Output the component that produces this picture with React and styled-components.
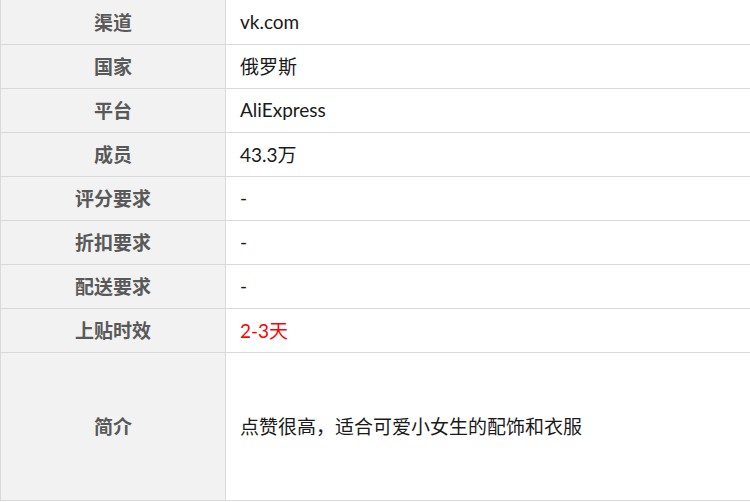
import styled, { createGlobalStyle } from 'styled-components'

const Global = createGlobalStyle`
   html, body { margin: 0; padding: 0; background: #fff; }
   body { font-family: "Noto Sans CJK SC", sans-serif; }
`

const rows = [
   ["渠道", "vk.com"],
   ["国家", "俄罗斯"],
   ["平台", "AliExpress"],
   ["成员", "43.3万"],
   ["评分要求", "-"],
   ["折扣要求", "-"],
   ["配送要求", "-"],
   ["上贴时效", "2-3天", true],
]

export default function App() {
   return <Page>
      <Global />
      <Table>
         {rows.map(([label, value, hot], i) => (
            <Row key={label} $first={i === 0}>
               <Label>{label}</Label>
               <Value $hot={hot}>{value}</Value>
            </Row>
         ))}
         <Row $tall>
            <Label>简介</Label>
            <Value>点赞很高，适合可爱小女生的配饰和衣服</Value>
         </Row>
      </Table>
   </Page>
}

const Page = styled.div`
   width: 750px;
   height: 502px;
   overflow: hidden;
   background: #fff;`

const Table = styled.div`
   display: flex;
   flex-direction: column;
   margin-top: -1px;
   border-left: 1px solid #d9d9d9;
   border-bottom: 1px solid #d9d9d9;`

const Row = styled.div`
   display: grid;
   grid-template-columns: 225px 1fr;
   height: ${p => p.$tall ? 148 : p.$first ? 45 : 44}px;
   box-sizing: border-box;
   border-top: 1px solid #d9d9d9;`

const Label = styled.div`
   display: flex;
   align-items: center;
   justify-content: center;
   padding-bottom: 2px;
   background: #f2f2f2;
   border-right: 1px solid #d9d9d9;
   font-weight: 700;
   font-size: 19px;
   color: #595959;`

const Value = styled.div`
   display: flex;
   align-items: center;
   padding-left: 14px;
   padding-bottom: 2px;
   font-family: "Lato", "Noto Sans CJK SC", sans-serif;
   font-size: 19px;
   color: ${p => p.$hot ? '#ff0000' : '#1a1a1a'};`
